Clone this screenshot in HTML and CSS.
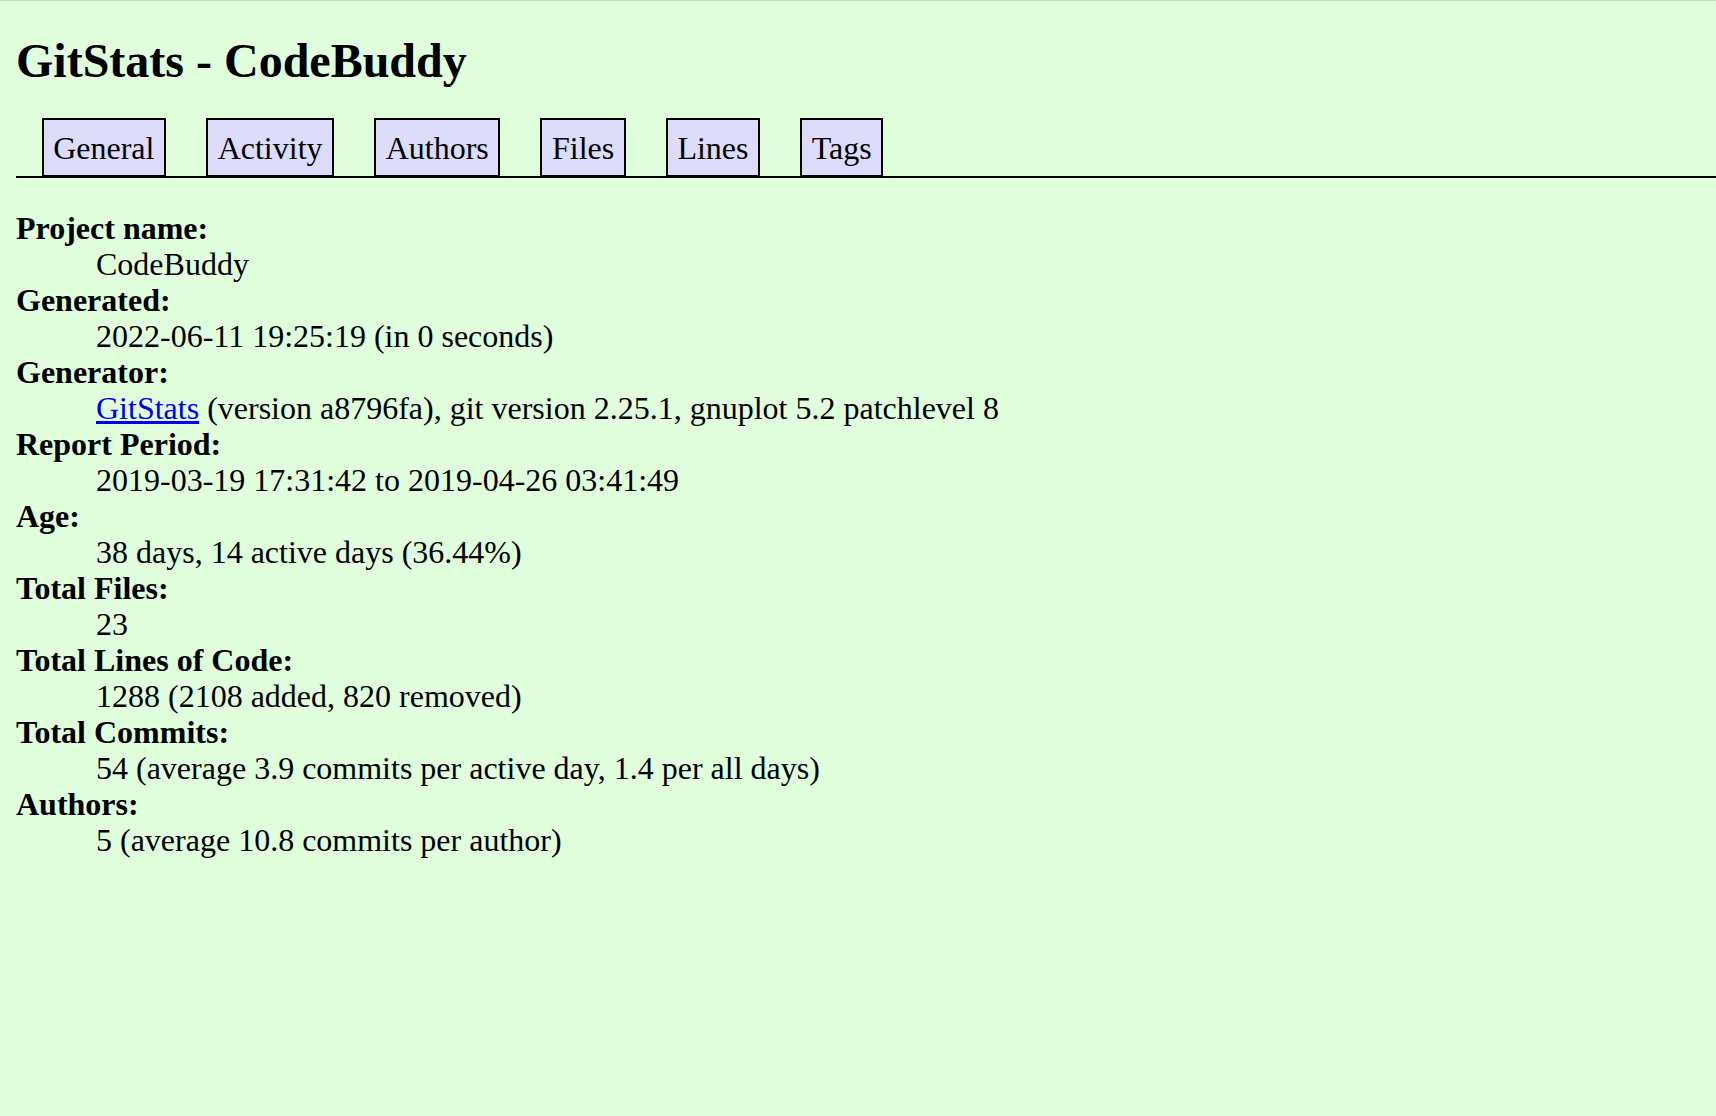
FILE: index.html
```html
<!DOCTYPE html>
<html>
<head>
<meta charset="UTF-8">
<title>GitStats - CodeBuddy</title>
<link rel="stylesheet" href="styles.css">
</head>
<body>
<h1>GitStats - CodeBuddy</h1>
<div class="nav">
<ul>
<li><a href="index.html">General</a></li>
<li><a href="activity.html">Activity</a></li>
<li><a href="authors.html">Authors</a></li>
<li><a href="files.html">Files</a></li>
<li><a href="lines.html">Lines</a></li>
<li><a href="tags.html">Tags</a></li>
</ul>
</div>
<dl>
<dt>Project name</dt><dd>CodeBuddy</dd>
<dt>Generated</dt><dd>2022-06-11 19:25:19 (in 0 seconds)</dd>
<dt>Generator</dt><dd><a class="ext" href="http://gitstats.sourceforge.net/">GitStats</a> (version a8796fa), git version 2.25.1, gnuplot 5.2 patchlevel 8</dd>
<dt>Report Period</dt><dd>2019-03-19 17:31:42 to 2019-04-26 03:41:49</dd>
<dt>Age</dt><dd>38 days, 14 active days (36.44%)</dd>
<dt>Total Files</dt><dd>23</dd>
<dt>Total Lines of Code</dt><dd>1288 (2108 added, 820 removed)</dd>
<dt>Total Commits</dt><dd>54 (average 3.9 commits per active day, 1.4 per all days)</dd>
<dt>Authors</dt><dd>5 (average 10.8 commits per author)</dd>
</dl>
</body>
</html>
```

FILE: styles.css
```css
html {
  border-top: 1px solid #c6dac3;
}

body {
  margin: 16px 0 16px 16px;
  font-family: "Liberation Serif", "Times New Roman", serif;
  font-size: 32px;
  color: black;
  background-color: #e0fddc;
}

h1 {
  font-size: 48px;
  margin: 16px 0 32px;
}

.nav {
  border-bottom: 2px solid black;
  padding: 0.3em;
}

.nav ul {
  list-style-type: none;
  display: inline;
  margin: 0;
  padding: 0;
}

.nav li {
  display: inline;
}

.nav li a {
  padding: 0.3em;
  text-decoration: none;
  color: black;
  border: 2px solid black;
  margin: 0.5em;
  background-color: #dddcfb;
}

dl {
  margin: 32px 0;
  line-height: 36px;
}

dt {
  font-weight: bold;
}

dt::after {
  content: ":";
}

dd {
  margin-left: 80px;
}

a.ext {
  color: #0000ee;
}
```
